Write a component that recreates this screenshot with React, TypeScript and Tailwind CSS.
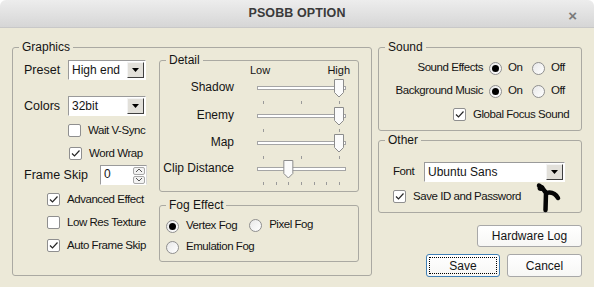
import React from 'react';

const font = { fontFamily: '"Liberation Sans", Arial, sans-serif' };

function Check({ checked }: { checked?: boolean }) {
  return (
    <span className="flex h-[13px] w-[13px] shrink-0 items-center justify-center rounded-[2px] border border-[#8f8f8f] bg-white">
      {checked && (
        <svg width="11" height="11" viewBox="0 0 11 11">
          <path d="M2 5.5 L4.5 8 L9.5 2.5" fill="none" stroke="#262626" strokeWidth="1.2" />
        </svg>
      )}
    </span>
  );
}

function Radio({ checked }: { checked?: boolean }) {
  return (
    <span className="flex h-[13px] w-[13px] shrink-0 items-center justify-center rounded-full border border-[#8f8f8f] bg-gradient-to-br from-[#e8e8e8] to-white">
      {checked && <span className="h-[7px] w-[7px] rounded-full bg-black" />}
    </span>
  );
}

function CheckRow({ label, checked, className = '' }: { label: string; checked?: boolean; className?: string }) {
  return (
    <div className={`flex h-[14px] items-center ${className}`}>
      <Check checked={checked} />
      <span className="ml-[7px] whitespace-nowrap text-[11.5px] leading-[14px] tracking-[-0.45px]">{label}</span>
    </div>
  );
}

function Arrow() {
  return (
    <svg width="7" height="4" viewBox="0 0 7 4">
      <path d="M0 0 H7 L3.5 4 Z" fill="#000" />
    </svg>
  );
}

function Select({ value, width }: { value: string; width: string }) {
  return (
    <div className={`flex h-[20px] ${width} border border-b-white border-l-[#9a9a9a] border-r-white border-t-[#9a9a9a] bg-white p-[1px]`}>
      <span className="flex-1 pl-[2px] text-[12px] leading-[16px]">{value}</span>
      <div className="flex h-full w-[17px] items-center justify-center border border-b-[#404040] border-l-[#f4f4f4] border-r-[#404040] border-t-[#f4f4f4] bg-[#e2e0da]">
        <Arrow />
      </div>
    </div>
  );
}

function Slider({ value, ticks }: { value: number; ticks: number }) {
  const cx = 9 + value * 76;
  const tickXs = Array.from({ length: ticks }, (_, i) => 9 + (76 * i) / (ticks - 1));
  return (
    <svg width="96" height="30" viewBox="0 0 96 30" className="shrink-0">
      <rect x="3.5" y="9.5" width="88" height="3" fill="#fff" stroke="#a5a5a5" />
      {tickXs.map((x, i) => (
        <line key={i} x1={Math.round(x) + 0.5} x2={Math.round(x) + 0.5} y1="24" y2="27" stroke="#9a9a9a" />
      ))}
      <path
        d={`M${cx - 4.5} 2.5 H${cx + 4.5} V15.5 L${cx} 20 L${cx - 4.5} 15.5 Z`}
        fill="#fbfbfb"
        stroke="#8c8c8c"
      />
    </svg>
  );
}

function SliderRow({ label, value, ticks, h }: { label: string; value: number; ticks: number; h: string }) {
  return (
    <div className={`flex items-start ${h}`}>
      <span className="mt-[3px] w-[74px] whitespace-nowrap text-right text-[12px] leading-[14px]">{label}</span>
      <div className="ml-[20px]">
        <Slider value={value} ticks={ticks} />
      </div>
    </div>
  );
}

function Group({ title, className, children }: { title: string; className: string; children: React.ReactNode }) {
  return (
    <fieldset className={`rounded-[3px] border border-[#aaa9a2] ${className}`}>
      <legend className="ml-[6px] px-[3px] text-[12px] leading-[14px]">{title}</legend>
      {children}
    </fieldset>
  );
}

function Button({ label, className = '', focused }: { label: string; className?: string; focused?: boolean }) {
  return (
    <div
      className={`flex items-center justify-center rounded-[3px] border bg-gradient-to-b from-white to-[#f7f7f5] text-[12px] ${
        focused ? 'border-[#3f7fb5] p-[2px]' : 'border-[#a8a8a8]'
      } ${className}`}
    >
      {focused ? (
        <span className="flex h-full w-full items-center justify-center border border-dotted border-black">{label}</span>
      ) : (
        label
      )}
    </div>
  );
}

const lbl = 'text-[11.5px] tracking-[-0.45px]';

export default function App() {
  return (
    <div className="h-[287px] w-[594px] overflow-hidden bg-white text-[#141414]" style={font}>
      <div className="relative flex h-[28px] items-center justify-center rounded-t-[6px] border-b border-[#c8c8c8] bg-gradient-to-b from-[#ededed] to-[#d6d6d6]">
        <span className="text-[12.5px] font-bold tracking-[0.1px] text-[#3a3a3a]">PSOBB OPTION</span>
        <span className="absolute right-[17px] top-[5px] text-[15px] font-bold text-[#7a7a7a]">×</span>
      </div>

      <div className="flex h-[259px] bg-[#ece9d8] pl-[12px] pt-[12px]">
        <Group title="Graphics" className="h-[236px] w-[360px]">
          <div className="flex">
            <div className="w-[146px] pl-[11px]">
              <div className="mt-[6px] flex h-[20px] items-center">
                <span className="w-[44px] text-[12.5px]">Preset</span>
                <Select value="High end" width="w-[78px]" />
              </div>
              <div className="mt-[16px] flex h-[20px] items-center">
                <span className="w-[44px] text-[12.5px]">Colors</span>
                <Select value="32bit" width="w-[78px]" />
              </div>
              <CheckRow label="Wait V-Sync" className="ml-[44px] mt-[7px]" />
              <CheckRow label="Word Wrap" checked className="ml-[45px] mt-[9px]" />
              <div className="mt-[5px] flex h-[20px] items-center">
                <span className="w-[76px] text-[12.5px]">Frame Skip</span>
                <div className="flex h-[20px] w-[47px] border border-b-white border-l-[#9a9a9a] border-r-[#d8d8d8] border-t-[#9a9a9a] bg-white">
                  <span className="flex-1 pl-[3px] text-[12px] leading-[17px]">0</span>
                  <div className="mr-[1px] flex flex-col justify-center gap-[1px]">
                    {['M2 5 L5 2 L8 5', 'M2 2 L5 5 L8 2'].map((d) => (
                      <span key={d} className="flex h-[8px] w-[12px] items-center justify-center rounded-[2px] border border-[#a8a8a8] bg-[#f3f3f3]">
                        <svg width="10" height="7" viewBox="0 0 10 7">
                          <path d={d} fill="none" stroke="#555" strokeWidth="1" />
                        </svg>
                      </span>
                    ))}
                  </div>
                </div>
              </div>
              <CheckRow label="Advanced Effect" checked className="ml-[23px] mt-[7px]" />
              <CheckRow label="Low Res Texture" className="ml-[23px] mt-[9px]" />
              <CheckRow label="Auto Frame Skip" checked className="ml-[23px] mt-[9px]" />
            </div>

            <div className="w-[200px]">
              <Group title="Detail" className="-mt-[1px] h-[139px] w-[200px]">
                <div className="-mt-[4px] flex h-[14px] items-center pl-[90px] pr-[8px] text-[11px]">
                  <span>Low</span>
                  <span className="ml-auto">High</span>
                </div>
                <SliderRow label="Shadow" value={1} ticks={3} h="h-[28px]" />
                <SliderRow label="Enemy" value={1} ticks={2} h="h-[27px]" />
                <SliderRow label="Map" value={1} ticks={3} h="h-[26px]" />
                <SliderRow label="Clip Distance" value={2 / 6} ticks={7} h="h-[30px]" />
              </Group>

              <Group title="Fog Effect" className="mt-[6px] h-[64px] w-[200px]">
                <div className="mt-[7px] flex h-[14px] items-center pl-[6px]">
                  <Radio checked />
                  <span className={`ml-[7px] ${lbl}`}>Vertex Fog</span>
                  <span className="ml-[12px] -translate-y-[1px]">
                    <Radio />
                  </span>
                  <span className={`ml-[7px] -translate-y-[1px] ${lbl}`}>Pixel Fog</span>
                </div>
                <div className="mt-[7px] flex h-[14px] items-center pl-[6px]">
                  <Radio />
                  <span className={`ml-[7px] ${lbl}`}>Emulation Fog</span>
                </div>
              </Group>
            </div>
          </div>
        </Group>

        <div className="relative ml-[6px] flex w-[204px] flex-col">
          <Group title="Sound" className="h-[91px] w-[204px]">
            {[
              ['Sound Effects', 'mt-[6px]'],
              ['Background Music', 'mt-[7px]'],
            ].map(([label, mt]) => (
              <div key={label} className={`flex h-[16px] items-center ${mt}`}>
                <span className={`w-[104px] whitespace-nowrap text-right ${lbl}`}>{label}</span>
                <span className="ml-[6px]">
                  <Radio checked />
                </span>
                <span className={`ml-[6px] w-[24px] ${lbl}`}>On</span>
                <Radio />
                <span className={`ml-[6px] ${lbl}`}>Off</span>
              </div>
            ))}
            <CheckRow label="Global Focus Sound" checked className="ml-[74px] mt-[8px]" />
          </Group>

          <Group title="Other" className="mt-[2px] h-[80px] w-[204px]">
            <div className="mt-[15px] flex h-[20px] items-center pl-[14px]">
              <span className={`w-[31px] ${lbl}`}>Font</span>
              <Select value="Ubuntu Sans" width="w-[141px]" />
            </div>
            <CheckRow label="Save ID and Password" checked className="ml-[14px] mt-[7px]" />
          </Group>

          <svg width="30" height="34" viewBox="0 0 30 34" className="absolute left-[155px] top-[142px]">
            <path
              d="M6 3.5 Q9 5 13 11 L12.5 28 M13 11 Q21 9 25 16"
              fill="none"
              stroke="#050505"
              strokeWidth="4.5"
              strokeLinecap="round"
              strokeLinejoin="round"
            />
            <ellipse cx="8" cy="6" rx="3.5" ry="3" fill="#050505" />
          </svg>

          <Button label="Hardware Log" className="ml-auto mt-[12px] h-[22px] w-[105px]" />
          <div className="mt-[7px] flex justify-end gap-[7px]">
            <Button label="Save" focused className="h-[23px] w-[74px]" />
            <Button label="Cancel" className="h-[23px] w-[75px]" />
          </div>
        </div>
      </div>
    </div>
  );
}
